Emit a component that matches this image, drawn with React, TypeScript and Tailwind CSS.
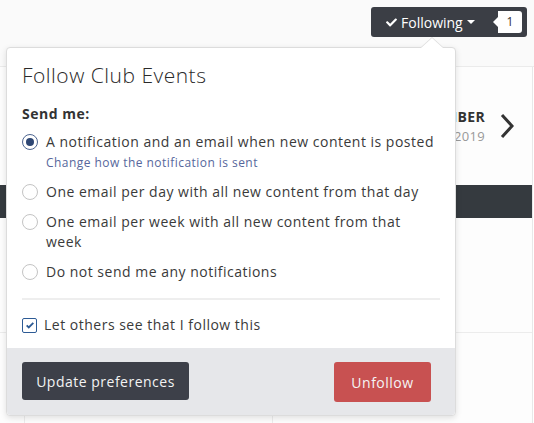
import React from "react";

const font = { fontFamily: '"Open Sans", "Noto Sans", sans-serif' };

const options = [
  { id: "all", label: "A notification and an email when new content is posted", sub: "Change how the notification is sent", checked: true },
  { id: "day", label: "One email per day with all new content from that day" },
  { id: "week", label: "One email per week with all new content from that week" },
  { id: "none", label: "Do not send me any notifications" },
];

const Radio = ({ checked }: { checked?: boolean }) => (
  <span
    className={
      "mt-[2px] flex h-[16px] w-[16px] shrink-0 items-center justify-center rounded-full border bg-white " +
      (checked ? "border-[#4d6590]" : "border-[#c4c4c4]")
    }
  >
    {checked && <span className="h-[8px] w-[8px] rounded-full bg-[#2d4673]" />}
  </span>
);

const FollowButton = () => (
  <div className="flex h-[30px] w-[156px] items-center rounded-[3px] bg-[#3b3e45] pl-[15px] pr-[5px] text-[14px] text-white">
    <svg viewBox="0 0 512 512" className="h-[11px] w-[11px] fill-white">
      <path d="M173.9 439.4L7.5 273c-10-10-10-26.2 0-36.2l36.2-36.2c10-10 26.2-10 36.2 0L192 312.7 432.1 72.6c10-10 26.2-10 36.2 0l36.2 36.2c10 10 10 26.2 0 36.2L210.1 439.4c-10 10-26.2 10-36.2 0z" />
    </svg>
    <span className="ml-[4px]">Following</span>
    <span className="ml-[4px] h-0 w-0 border-x-[4px] border-t-[4px] border-x-transparent border-t-white" />
    <span className="relative ml-auto flex h-[22px] w-[24px] items-center justify-center rounded-r-[3px] bg-white text-[12px] text-[#333]">
      <span className="absolute left-[-5px] top-[6px] h-0 w-0 border-y-[5px] border-r-[5px] border-y-transparent border-r-white" />
      1
    </span>
  </div>
);

export default function App() {
  return (
    <div className="relative h-[423px] w-[534px] overflow-hidden bg-white text-[#3a3a3a]" style={font}>
      {/* page behind */}
      <div className="flex h-[67px] justify-end border-b border-[#ebebeb] bg-[#fafafa] pr-[7px] pt-[7px]">
        <FollowButton />
      </div>
      <div className="w-[533px] border-r border-[#e8e8e8] bg-[#fdfdfd]">
        <div className="flex h-[118px] items-center justify-end pr-[18px]">
          <div className="flex flex-col items-end leading-[18px] tracking-[0.3px]">
            <span className="text-[14px] font-bold text-[#333]">DECEMBER</span>
            <span className="mt-[1px] text-[13px] text-[#999]">2019</span>
          </div>
          <svg viewBox="0 0 14 26" className="ml-[15px] h-[26px] w-[14px]">
            <path d="M2 2l10 11L2 24" fill="none" stroke="#333" strokeWidth="3" />
          </svg>
        </div>
        <div className="h-[33px] bg-[#353a3f]" />
        <div className="h-[115px] border-b border-[#ececec]" />
        <div className="flex h-[90px]">
          <div className="w-[24px]" />
          <div className="w-[248px] border-l border-[#ececec]" />
          <div className="flex-1 border-l border-[#ececec]" />
        </div>
      </div>

      {/* popover */}
      <div className="absolute left-[6px] top-[47px] w-[450px] rounded-[4px] border border-[#dcdcdc] bg-white tracking-[0.5px] shadow-[0_2px_6px_rgba(0,0,0,0.12)]">
        <span className="absolute left-[413px] top-[-11px] h-0 w-0 border-x-[12px] border-b-[11px] border-x-transparent border-b-[#dcdcdc]" />
        <span className="absolute left-[414px] top-[-10px] h-0 w-0 border-x-[11px] border-b-[10px] border-x-transparent border-b-white" />
        <div className="px-[15px] pb-[13px] pt-[13px]">
          <h2 className="text-[21px] font-light leading-[28px] text-[#2a2a2a]">Follow Club Events</h2>
          <div className="mt-[15px] text-[14px] font-bold leading-[20px] text-[#333]">Send me:</div>
          <div className="mt-[8px] flex flex-col gap-[10px]">
            {options.map((o) => (
              <label key={o.id} className="flex gap-[8px] text-[14px] leading-[20px]">
                <Radio checked={o.checked} />
                <span>
                  {o.label}
                  {o.sub && <span className="block pt-[1px] text-[12px] leading-[19px] tracking-[0.45px] text-[#56679c]">{o.sub}</span>}
                </span>
              </label>
            ))}
          </div>
          <div className="mt-[16px] h-[2px] bg-[#eeeeee]" />
          <label className="mt-[15px] flex items-center gap-[7px] text-[14px] leading-[20px]">
            <span className="flex h-[15px] w-[15px] items-center justify-center rounded-[2px] border-[1.5px] border-[#2d5b95] bg-white">
              <svg viewBox="0 0 12 12" className="h-[10px] w-[10px]">
                <path d="M2 6.5l2.5 2.5L10 3.5" fill="none" stroke="#2d5b95" strokeWidth="2.2" />
              </svg>
            </span>
            Let others see that I follow this
          </label>
        </div>
        <div className="flex items-start justify-between rounded-b-[4px] bg-[#e6e7ea] pb-[13px] pl-[15px] pr-[24px] pt-[14px] text-[14px]">
          <button className="h-[38px] w-[167px] rounded-[3px] bg-[#3d4049] text-[#f3f3f3]">Update preferences</button>
          <button className="h-[40px] w-[97px] rounded-[3px] bg-[#c85151] text-[#f5f5f5]">Unfollow</button>
        </div>
      </div>
    </div>
  );
}
